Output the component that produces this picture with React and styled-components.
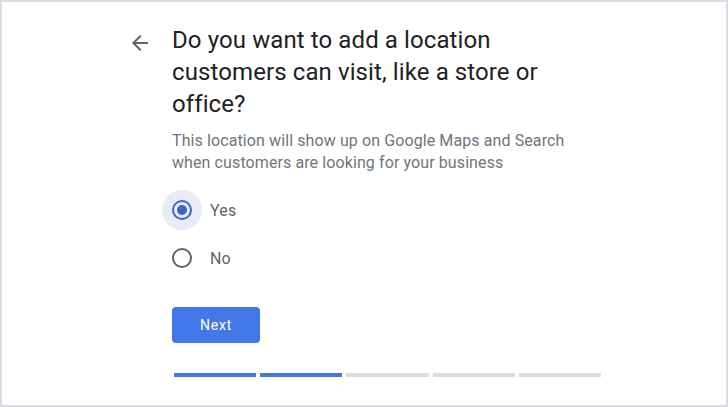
import React, { useState } from "react";
import styled, { createGlobalStyle } from "styled-components";

const Global = createGlobalStyle`
  html, body { margin: 0; padding: 0; background: #fff; }
  * { box-sizing: border-box; }
  body { font-family: Roboto, "Noto Sans", Arial, sans-serif; }
`;

const Frame = styled.div`
  width: 728px;
  height: 407px;
  border: 2px solid #dadce0;
  background: #fff;
  padding: 22px 0 0 126px;
  overflow: hidden;
`;

const Layout = styled.div`
  display: flex;
  align-items: flex-start;
`;

const BackButton = styled.button`
  width: 24px;
  height: 24px;
  margin: 7px 20px 0 0;
  padding: 0;
  border: none;
  background: none;
  color: #5f6368;
  display: flex;
  align-items: center;
  justify-content: center;
  cursor: pointer;
  flex-shrink: 0;
`;

const Content = styled.div`
  display: flex;
  flex-direction: column;
  width: 440px;
`;

const Title = styled.h1`
  margin: 0;
  font-family: Roboto, "Noto Sans", sans-serif;
  font-weight: 400;
  font-size: 24px;
  line-height: 32px;
  color: #202124;
  width: 385px;
  letter-spacing: 0.1px;
`;

const Subtitle = styled.p`
  margin: 10px 0 0;
  font-size: 16px;
  line-height: 22px;
  color: #70757a;
  letter-spacing: 0.1px;
`;

const RadioGroup = styled.div`
  margin-top: 12px;
  margin-left: -10px;
  display: flex;
  flex-direction: column;
`;

const RadioRow = styled.label`
  display: flex;
  align-items: center;
  height: 48px;
  cursor: pointer;
`;

const Halo = styled.span`
  width: 40px;
  height: 40px;
  border-radius: 50%;
  display: flex;
  align-items: center;
  justify-content: center;
  background: ${(p) => (p.$active ? "#e8ecf6" : "transparent")};
`;

const Circle = styled.span`
  width: 20px;
  height: 20px;
  border-radius: 50%;
  border: 2px solid ${(p) => (p.$checked ? "#3b66cc" : "#5f6368")};
  display: flex;
  align-items: center;
  justify-content: center;
  &::after {
    content: "";
    width: 10px;
    height: 10px;
    border-radius: 50%;
    background: #3b66cc;
    display: ${(p) => (p.$checked ? "block" : "none")};
  }
`;

const RadioLabel = styled.span`
  margin-left: 8px;
  font-size: 16px;
  color: #5f6368;
  letter-spacing: 0.2px;
`;

const NextButton = styled.button`
  margin-top: 25px;
  width: 88px;
  height: 36px;
  border: none;
  border-radius: 4px;
  background: #4378e8;
  color: #fff;
  font-family: Roboto, "Noto Sans", sans-serif;
  font-size: 14px;
  font-weight: 400;
  letter-spacing: 0.8px;
  cursor: pointer;
`;

const Progress = styled.div`
  margin: 30px 0 0 2px;
  width: 427px;
  display: flex;
  gap: 4px;
`;

const Segment = styled.div`
  flex: 1;
  height: 4px;
  background: ${(p) => (p.$done ? "#4378e8" : "#dadce0")};
`;

export default function App() {
  const [choice, setChoice] = useState("yes");
  const options = [
    { id: "yes", label: "Yes" },
    { id: "no", label: "No" },
  ];
  return (
    <>
      <Global />
      <Frame>
        <Layout>
          <BackButton aria-label="Back">
            <svg width="24" height="24" viewBox="0 0 24 24" fill="currentColor">
              <path d="M20 11H7.83l5.59-5.59L12 4l-8 8 8 8 1.41-1.41L7.83 13H20v-2z" />
            </svg>
          </BackButton>
          <Content>
            <Title>Do you want to add a location customers can visit, like a store or office?</Title>
            <Subtitle>
              This location will show up on Google Maps and Search
              <br />
              when customers are looking for your business
            </Subtitle>
            <RadioGroup>
              {options.map((o) => (
                <RadioRow key={o.id} onClick={() => setChoice(o.id)}>
                  <Halo $active={choice === o.id}>
                    <Circle $checked={choice === o.id} />
                  </Halo>
                  <RadioLabel>{o.label}</RadioLabel>
                </RadioRow>
              ))}
            </RadioGroup>
            <div>
              <NextButton>Next</NextButton>
            </div>
            <Progress>
              {[true, true, false, false, false].map((d, i) => (
                <Segment key={i} $done={d} />
              ))}
            </Progress>
          </Content>
        </Layout>
      </Frame>
    </>
  );
}
